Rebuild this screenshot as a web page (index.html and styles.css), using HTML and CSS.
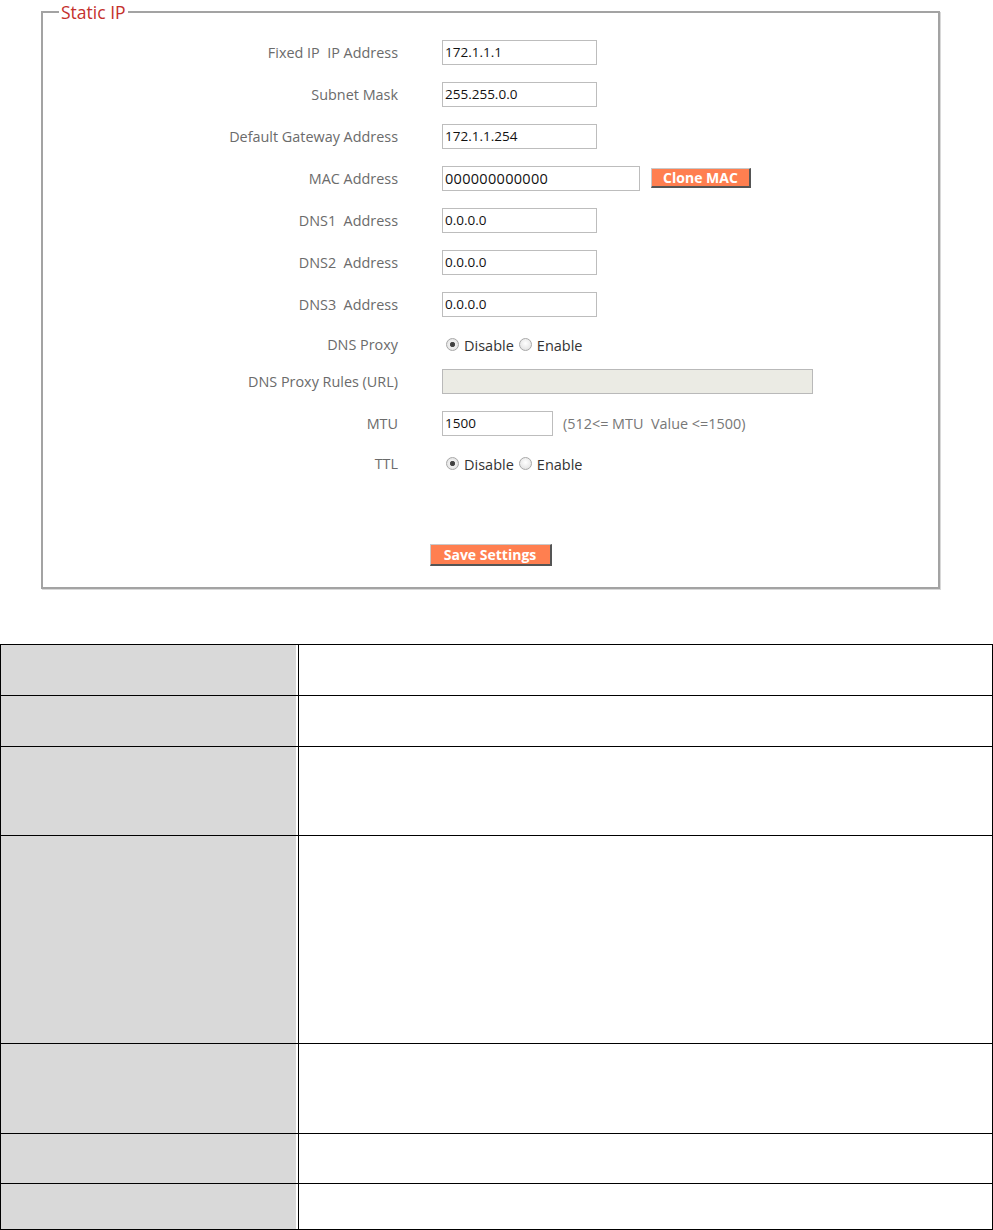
FILE: index.html
```html
<!DOCTYPE html>
<html>
<head>
<meta charset="utf-8">
<title>Static IP</title>
<link rel="stylesheet" href="styles.css">
</head>
<body>
<div class="page">
  <fieldset class="panel">
    <legend class="panel-title">Static IP</legend>
    <div class="form">
      <div class="row row-input">
        <div class="label">Fixed IP&nbsp; IP Address</div>
        <div class="control"><input class="field field-md" type="text" value="172.1.1.1"></div>
      </div>
      <div class="row row-input">
        <div class="label">Subnet Mask</div>
        <div class="control"><input class="field field-md" type="text" value="255.255.0.0"></div>
      </div>
      <div class="row row-input">
        <div class="label">Default Gateway Address</div>
        <div class="control"><input class="field field-md" type="text" value="172.1.1.254"></div>
      </div>
      <div class="row row-input">
        <div class="label">MAC Address</div>
        <div class="control"><input class="field field-lg field-mac" type="text" value="000000000000"><button class="btn btn-clone" type="button">Clone MAC</button></div>
      </div>
      <div class="row row-input">
        <div class="label">DNS1&nbsp; Address</div>
        <div class="control"><input class="field field-md" type="text" value="0.0.0.0"></div>
      </div>
      <div class="row row-input">
        <div class="label">DNS2&nbsp; Address</div>
        <div class="control"><input class="field field-md" type="text" value="0.0.0.0"></div>
      </div>
      <div class="row row-input">
        <div class="label">DNS3&nbsp; Address</div>
        <div class="control"><input class="field field-md" type="text" value="0.0.0.0"></div>
      </div>
      <div class="row row-proxy">
        <div class="label">DNS Proxy</div>
        <div class="control radios">
          <label class="opt"><input class="radio" type="radio" name="proxy" checked><span>Disable</span></label>
          <label class="opt"><input class="radio" type="radio" name="proxy"><span>Enable</span></label>
        </div>
      </div>
      <div class="row row-rules">
        <div class="label">DNS Proxy Rules (URL)</div>
        <div class="control"><input class="field field-xl" type="text" value="" disabled></div>
      </div>
      <div class="row row-mtu">
        <div class="label">MTU</div>
        <div class="control"><input class="field field-sm" type="text" value="1500"><span class="hint">(512&lt;= MTU&nbsp; Value &lt;=1500)</span></div>
      </div>
      <div class="row row-ttl">
        <div class="label">TTL</div>
        <div class="control radios">
          <label class="opt"><input class="radio" type="radio" name="ttl" checked><span>Disable</span></label>
          <label class="opt"><input class="radio" type="radio" name="ttl"><span>Enable</span></label>
        </div>
      </div>
    </div>
    <div class="actions">
      <button class="btn btn-save" type="button">Save Settings</button>
    </div>
  </fieldset>

  <table class="desc">
    <colgroup><col class="col-key"><col class="col-val"></colgroup>
    <tr class="h51"><td class="key"></td><td class="val"></td></tr>
    <tr class="h51"><td class="key"></td><td class="val"></td></tr>
    <tr class="h89"><td class="key"></td><td class="val"></td></tr>
    <tr class="h208"><td class="key"></td><td class="val"></td></tr>
    <tr class="h90"><td class="key"></td><td class="val"></td></tr>
    <tr class="h50"><td class="key"></td><td class="val"></td></tr>
    <tr class="h46"><td class="key"></td><td class="val"></td></tr>
  </table>
</div>
</body>
</html>
```

FILE: styles.css
```css
* { box-sizing: border-box; }

html, body {
  margin: 0;
  padding: 0;
  background: #ffffff;
}

body {
  font-family: "Open Sans", "Noto Sans", "DejaVu Sans", sans-serif;
  font-size: 13px;
  color: #666666;
}

.page {
  width: 993px;
  padding-top: 1px;
}

.panel {
  margin: 0 0 0 41px;
  width: 899px;
  padding: 8px 0 21px 0;
  border: 2px solid #a3a3a3;
  box-shadow: 1px 1px 0 #d8d8d8;
  min-width: 0;
}

.panel-title {
  margin-left: 16px;
  padding: 0 2px;
  font-size: 17.5px;
  line-height: 22px;
  color: #c4302c;
}

.form {
  display: flex;
  flex-direction: column;
}

.row {
  display: flex;
  align-items: center;
}

.row-input { height: 42px; }
.row-proxy { height: 38px; }
.row-rules { height: 37px; }
.row-mtu { height: 46px; }
.row-ttl { height: 34px; }

.label {
  width: 355px;
  text-align: right;
  color: #6b6b6b;
  font-size: 14.4px;
  white-space: nowrap;
}

.control {
  margin-left: 44px;
  display: flex;
  align-items: center;
}

.field {
  height: 25px;
  margin: 0;
  padding: 0 2px;
  border: 1px solid #bdbdbd;
  font-family: inherit;
  font-size: 13.5px;
  color: #111;
  background: #fff;
  outline: none;
}

.field-mac { font-size: 14.5px; letter-spacing: 0.3px; }

.field-sm { width: 111px; }
.field-md { width: 155px; }
.field-lg { width: 198px; }
.field-xl { width: 371px; }

.field:disabled {
  background: #ebebe4;
  border-color: #b9b9b9;
}

.btn {
  margin: 0;
  padding: 0;
  background: #ff7f50;
  color: #ffffff;
  font-family: inherit;
  font-weight: 700;
  font-size: 14px;
  border-style: solid;
  border-width: 1px 2px 2px 1px;
  border-color: #c9c9c9 #555555 #555555 #c9c9c9;
  line-height: 1;
}

.btn-clone {
  margin-left: 11px;
  width: 100px;
  height: 20px;
}

.btn-save {
  width: 122px;
  height: 22px;
}

.radios {
  color: #333333;
  font-size: 14.5px;
  padding-top: 2px;
}

.opt {
  display: inline-flex;
  align-items: center;
  margin-right: 1px;
}

.radio {
  appearance: none;
  -webkit-appearance: none;
  width: 13px;
  height: 13px;
  margin: 0 5px 0 4px;
  border: 1px solid #a8a8a8;
  border-radius: 50%;
  background: radial-gradient(circle at 50% 40%, #ffffff 0%, #e6e6e6 70%, #d4d4d4 100%);
  position: relative;
  top: -1px;
}

.radio:checked {
  background: radial-gradient(circle, #3a3a3a 0, #4a4a4a 2.2px, #f0f0f0 3px, #dcdcdc 100%);
}

.hint {
  margin-left: 10px;
  color: #777777;
  font-size: 14.4px;
}

.actions {
  display: flex;
  justify-content: center;
  margin-top: 64px;
}

.desc {
  margin-top: 55px;
  width: 993px;
  border-collapse: collapse;
  table-layout: fixed;
}

.col-key { width: 298px; }

.desc td {
  border: 1px solid #000000;
  padding: 0;
}

.desc .key {
  background: #d9d9d9;
  box-shadow: inset -2px 0 0 #ffffff;
}

.desc .val { background: #ffffff; }

.h51 { height: 51px; }
.h89 { height: 89px; }
.h208 { height: 208px; }
.h90 { height: 90px; }
.h50 { height: 50px; }
.h46 { height: 46px; }
```
